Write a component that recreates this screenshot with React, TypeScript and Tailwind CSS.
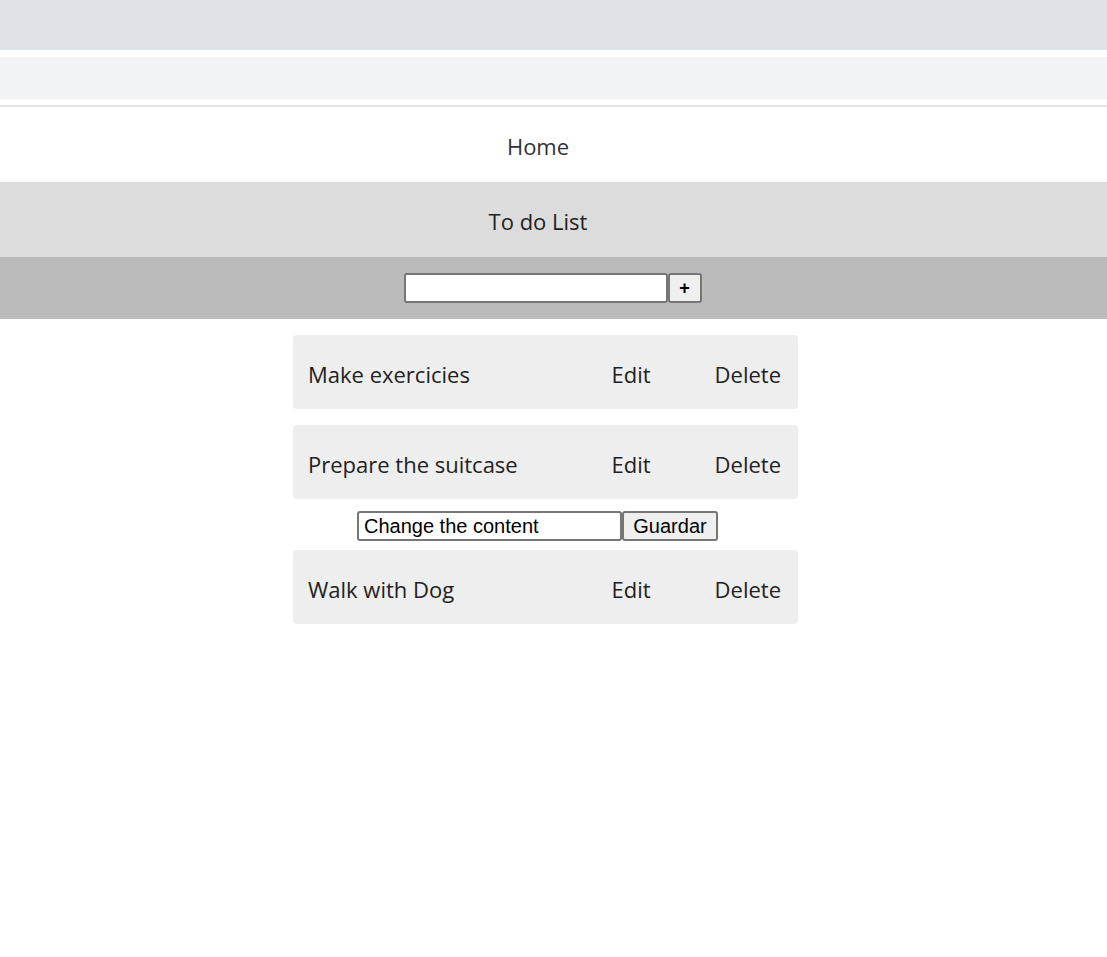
const todos = ["Make exercicies", "Prepare the suitcase", "Walk with Dog"]

function TodoCard({ text }: { text: string }) {
  return (
    <div className="flex h-[74px] w-[505px] items-center rounded-[4px] bg-[#eeeeee] pl-[15px] pr-[17px] pt-[4px] text-[22px] text-[#222]">
      <span className="flex-1">{text}</span>
      <span className="mr-[64px]">Edit</span>
      <span>Delete</span>
    </div>
  )
}

export default function App() {
  return (
    <div className="min-h-[957px] bg-white font-['Open_Sans',sans-serif]">
      <div className="h-[50px] bg-[#dee1e6]" />
      <div className="h-[7px] bg-white" />
      <div className="h-[42px] bg-[#f1f3f4]" />
      <div className="h-[6px] bg-white" />
      <div className="h-[2px] bg-[#e3e3e3]" />

      <nav className="flex h-[75px] items-center justify-center pr-[31px] pt-[4px] text-[22px] text-[#333]">
        Home
      </nav>
      <header className="flex h-[75px] items-center justify-center bg-[#dcdcdc] pr-[31px] pt-[4px] text-[22px] text-[#222]">
        To do List
      </header>

      <div className="flex h-[62px] items-center justify-center bg-[#bbbbbb] pr-[2px]">
        <input
          className="h-[30px] w-[264px] rounded-[3px] border-2 border-[#767676] bg-white"
          defaultValue=""
        />
        <button className="h-[30px] w-[34px] rounded-[3px] border-2 border-[#767676] bg-[#efefef] font-['Liberation_Sans',sans-serif] text-[18px] font-bold leading-none text-black">
          +
        </button>
      </div>

      <div className="flex flex-col items-center pt-[16px]">
        <div className="flex flex-col items-center pr-[16px]">
          <TodoCard text={todos[0]} />
          <div className="mt-[16px]">
            <TodoCard text={todos[1]} />
          </div>
        </div>
        <div className="mb-[9px] mt-[12px] flex pr-[32px]">
          <input
            className="h-[30px] w-[265px] rounded-[3px] border-2 border-[#767676] bg-white px-[5px] font-['Liberation_Sans',sans-serif] text-[20px] text-black"
            defaultValue="Change the content"
          />
          <button className="h-[30px] w-[96px] rounded-[3px] border-2 border-[#767676] bg-[#efefef] font-['Liberation_Sans',sans-serif] text-[20px] leading-none text-black">
            Guardar
          </button>
        </div>
        <div className="pr-[16px]">
          <TodoCard text={todos[2]} />
        </div>
      </div>
    </div>
  )
}
